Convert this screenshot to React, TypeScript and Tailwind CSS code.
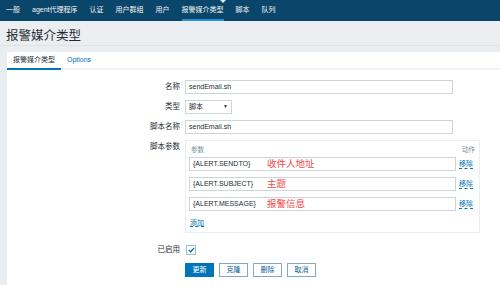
import React from 'react';

const font = { fontFamily: '"Liberation Sans", "Noto Sans CJK SC", sans-serif' };

const navItems = ['一般', 'agent代理程序', '认证', '用户群组', '用户', '报警媒介类型', '脚本', '队列'];

const params = [
  { macro: '{ALERT.SENDTO}', note: '收件人地址' },
  { macro: '{ALERT.SUBJECT}', note: '主题' },
  { macro: '{ALERT.MESSAGE}', note: '报警信息' },
];

function Row({ label, children, className = '' }: { label: string; children: React.ReactNode; className?: string }) {
  return (
    <div className={`flex ${className}`}>
      <div className="w-[178px] shrink-0 pr-[5px] text-right text-[7.5px] leading-[14px] text-[#1f2c33]">{label}</div>
      {children}
    </div>
  );
}

export default function App() {
  return (
    <div className="w-[500px] h-[285px] overflow-hidden bg-[#ebeef0]" style={font}>
      {/* sub navigation */}
      <div className="relative flex h-[21px] items-stretch gap-[12px] bg-[#0a466a] pl-[6px]">
        <div className="absolute left-[220px] top-0 h-0 w-0 border-x-[3px] border-t-[3px] border-x-transparent border-t-[#dfe5e9]" />
        {navItems.map((item) => (
          <div
            key={item}
            className={`flex items-center text-[7px] text-[#f2f4f5] ${
              item === '报警媒介类型' ? 'border-b-2 border-[#2a8ed8] pt-[2px]' : ''
            }`}
          >
            {item}
          </div>
        ))}
      </div>

      {/* title */}
      <div className="flex h-[25px] items-center border-b border-[#dde2e5] pl-[6px] pt-[6px] text-[12.5px] text-[#1f2c33]">
        报警媒介类型
      </div>

      {/* content */}
      <div className="ml-[7px] mt-[6px] h-[240px] bg-white">
        <div className="flex h-[18px] items-stretch border-b-2 border-[#f0f2f3] text-[7px]">
          <div className="-mb-[2px] flex w-[54px] items-center justify-center border-b-2 border-[#0275b8] pt-[1px] text-[#1f2c33]">
            报警媒介类型
          </div>
          <div className="flex items-center pl-[6px] pt-[1px] text-[#0275b8]">Options</div>
        </div>

        <div className="flex flex-col gap-[6px] pt-[10px] text-[7px] text-[#1f2c33]">
          <Row label="名称">
            <div className="flex h-[14px] w-[268px] items-center border border-[#cdd5da] px-[3px]">sendEmail.sh</div>
          </Row>
          <Row label="类型">
            <div className="flex h-[14px] w-[47px] items-center justify-between border border-[#cdd5da] px-[3px]">
              <span>脚本</span>
              <span className="text-[5px]">▼</span>
            </div>
          </Row>
          <Row label="脚本名称">
            <div className="flex h-[14px] w-[268px] items-center border border-[#cdd5da] px-[3px]">sendEmail.sh</div>
          </Row>
          <Row label="脚本参数">
            <div className="flex h-[93px] w-[295px] flex-col border border-[#eceff1] pl-[3px] pr-[4px]">
              <div className="flex h-[14px] items-end justify-between text-[6.5px] text-[#768d99]">
                <span className="pl-[2px]">参数</span>
                <span>动作</span>
              </div>
              <div className="mt-[2px] flex flex-col gap-[6px]">
                {params.map((p) => (
                  <div key={p.macro} className="flex items-center gap-[3px]">
                    <div className="flex h-[14px] w-[267px] items-center border border-[#cdd5da] px-[3px]">
                      <span className="w-[74px] shrink-0">{p.macro}</span>
                      <span className="text-[9.5px] text-[#f04848]">{p.note}</span>
                    </div>
                    <span className="border-b border-dashed border-[#0275b8] leading-[8px] text-[#0275b8]">移除</span>
                  </div>
                ))}
              </div>
              <div className="mt-[7px] pl-[1px]">
                <span className="border-b border-dashed border-[#0275b8] leading-[8px] text-[#0275b8]">添加</span>
              </div>
            </div>
          </Row>
          <Row label="已启用" className="mt-[4px]">
            <div className="flex h-[14px] items-center pl-[1px]">
              <div className="flex h-[10px] w-[10px] items-center justify-center border border-[#acbbc4] bg-white">
                <svg width="7" height="6" viewBox="0 0 7 6">
                  <path d="M0.8 3 L2.7 4.8 L6.2 1" fill="none" stroke="#0275b8" strokeWidth="1.3" />
                </svg>
              </div>
            </div>
          </Row>
          <div className="flex gap-[5px] pl-[178px]">
            <div className="flex h-[14px] w-[29px] items-center justify-center bg-[#0275b8] text-white">更新</div>
            {['克隆', '删除', '取消'].map((b) => (
              <div
                key={b}
                className="flex h-[14px] w-[29px] items-center justify-center border border-[#7fa9c8] bg-white text-[#0b5d95]"
              >
                {b}
              </div>
            ))}
          </div>
        </div>
      </div>
    </div>
  );
}
